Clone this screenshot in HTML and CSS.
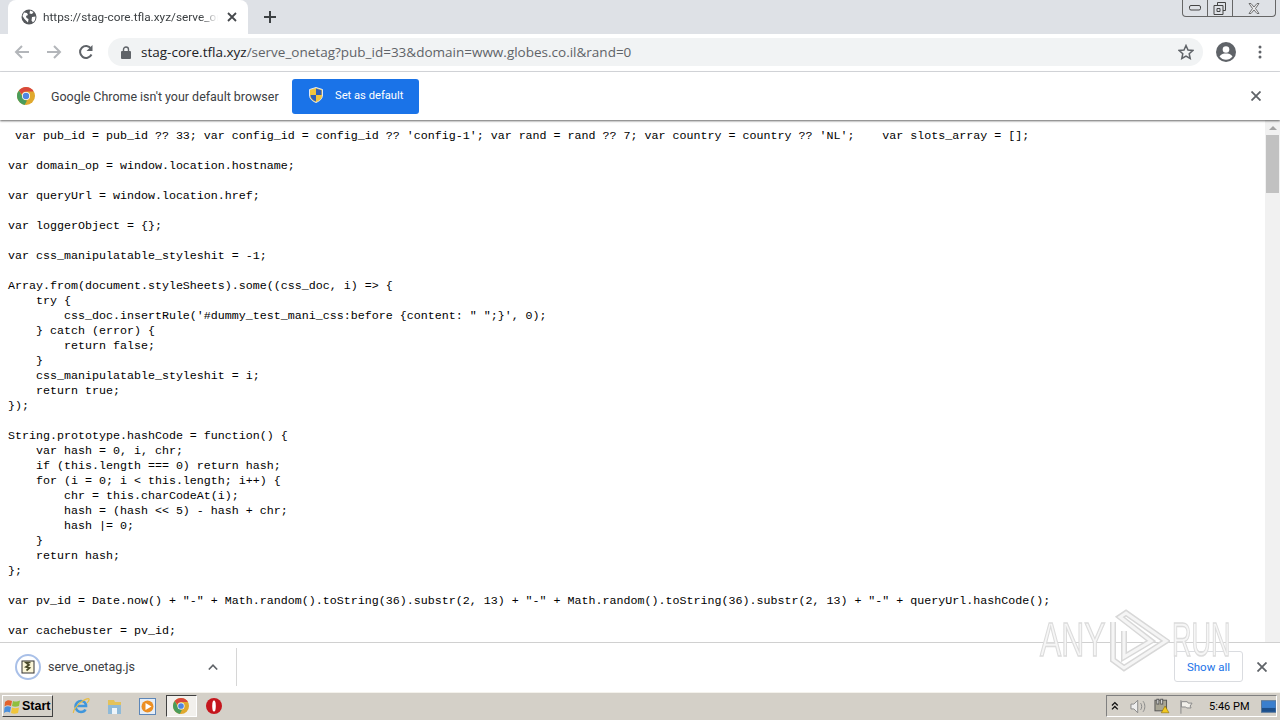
FILE: index.html
```html
<!DOCTYPE html>
<html lang="en">
<head>
    <meta charset="UTF-8">
    <meta name="viewport" content="width=device-width, initial-scale=1.0">
    <title>serve_onetag.js</title>
    <link rel="stylesheet" href="styles.css">
</head>
<body>
    <div class="window">
        <div class="tabstrip">
            <div class="tab">
                <svg class="tab-globe" width="16" height="16" viewBox="0 0 16 16"><circle cx="8" cy="8" r="7.5" fill="#55585c"/><path d="M3 3.500l3 .5 1 2-2 1 .5 2 2 1-.5 3.500L3.500 10 1.500 7zM9 1.500l3.500 1.500-1.500 2-2.500-.5zM11 8l3.500-.5-.5 3.500-2 2.500-1.500-2z" fill="#fff"/></svg>
                <span class="tab-title">https://stag-core.tfla.xyz/serve_on</span>
                <svg class="tab-close" width="10" height="10" viewBox="0 0 10 10"><path d="M1 1l8 8M9 1l-8 8" stroke="#45484c" stroke-width="1.800"/></svg>
            </div>
            <svg class="newtab" width="14" height="14" viewBox="0 0 14 14"><path d="M7 1v12M1 7h12" stroke="#3c4043" stroke-width="2"/></svg>
            <div class="winbtns">
                <div class="winbtn winbtn-min"><svg width="14" height="8" viewBox="0 0 14 8"><rect x="1.500" y="1.500" width="11" height="4.500" rx="1.500" fill="none" stroke="#444"/></svg></div>
                <div class="winbtn winbtn-max"><svg width="14" height="13" viewBox="0 0 14 13"><path d="M4.500 3V.5h8v8H10M1 3.500h9v9H1zM4 6.500h3v3H4z" fill="none" stroke="#444"/></svg></div>
                <div class="winbtn winbtn-close"><svg width="12" height="11" viewBox="0 0 12 11"><path d="M1 .5h2l3 3.500 3-3.500h2L7.500 5.500 11 10.500H9L6 7 3 10.500H1l3.500-5z" fill="#e8e8ea" stroke="#555" stroke-width=".8"/></svg></div>
            </div>
        </div>

        <div class="toolbar">
            <svg class="nav-icon" width="16" height="16" viewBox="0 0 16 16"><path d="M15 8H2M8 2L2 8l6 6" fill="none" stroke="#b3b6ba" stroke-width="2"/></svg>
            <svg class="nav-icon" width="16" height="16" viewBox="0 0 16 16"><path d="M1 8h13M8 2l6 6-6 6" fill="none" stroke="#b3b6ba" stroke-width="2"/></svg>
            <svg class="nav-icon nav-reload" width="16" height="16" viewBox="0 0 16 16"><path d="M13.500 10.500A6 6 0 1 1 13 4.500" fill="none" stroke="#5f6368" stroke-width="2"/><path d="M14.500 1v6h-6z" fill="#5f6368"/></svg>
            <div class="omnibox">
                <svg class="lock" width="10" height="13" viewBox="0 0 10 13"><path d="M2.500 5V3.500a2.500 2.500 0 0 1 5 0V5" fill="none" stroke="#5f6368" stroke-width="1.400"/><rect y="5" width="10" height="8" rx="1" fill="#5f6368"/></svg>
                <span class="url"><span class="url-host">stag-core.tfla.xyz</span>/serve_onetag?pub_id=33&amp;domain=www.globes.co.il&amp;rand=0</span>
                <svg class="star" width="16" height="16" viewBox="0 0 16 16"><path d="M8 1.500l2 4.500 4.800.5-3.600 3.200 1 4.800L8 12l-4.200 2.500 1-4.800L1.200 6.500 6 6z" fill="none" stroke="#5f6368" stroke-width="1.500"/></svg>
            </div>
            <svg class="avatar" width="20" height="20" viewBox="0 0 20 20"><circle cx="10" cy="10" r="10" fill="#5f6368"/><circle cx="10" cy="7.500" r="3.300" fill="#fff"/><path d="M3.500 14.500c1.500-2.500 4-3 6.500-3s5 .5 6.500 3c-1.500 2-4 3.300-6.500 3.300s-5-1.300-6.500-3.300z" fill="#fff"/></svg>
            <svg class="dots" width="4" height="14" viewBox="0 0 4 14"><circle cx="2" cy="2" r="1.500" fill="#5f6368"/><circle cx="2" cy="7" r="1.500" fill="#5f6368"/><circle cx="2" cy="12" r="1.500" fill="#5f6368"/></svg>
        </div>

        <div class="infobar">
            <svg class="chrome-icon" width="18" height="18" viewBox="0 0 18 18"><circle cx="9" cy="9" r="9" fill="#e0a92e"/><path d="M9 0a9 9 0 0 1 7.800 4.500H9A4.500 4.500 0 0 0 4.800 7.400L1.900 3.500A9 9 0 0 1 9 0z" fill="#d9483b"/><path d="M1.900 3.500l3.900 6.800A4.500 4.500 0 0 0 10 13.400L7.700 17.900A9 9 0 0 1 1.900 3.500z" fill="#4a9c5b"/><circle cx="9" cy="9" r="4" fill="#fff"/><circle cx="9" cy="9" r="3.200" fill="#4f86e0"/></svg>
            <span class="info-text">Google Chrome isn't your default browser</span>
            <div class="default-btn">
                <svg width="14" height="16" viewBox="0 0 14 16"><path d="M7 .5l6.500 2v5.500c0 3.800-2.800 6-6.500 7.500-3.700-1.500-6.500-3.700-6.500-7.500V2.500z" fill="#f2c53d" stroke="#dfe8f5"/><path d="M7 1.500l5.500 1.700V8H7zM7 8v6.500C3.800 13.200 1.500 11.200 1.500 8z" fill="#2f5fb8"/></svg>
                <span>Set as default</span>
            </div>
            <svg class="info-close" width="10" height="10" viewBox="0 0 10 10"><path d="M.5.5l9 9M9.500.5l-9 9" stroke="#5f6368" stroke-width="1.800"/></svg>
        </div>

        <div class="content">
<pre class="source"> var pub_id = pub_id ?? 33; var config_id = config_id ?? 'config-1'; var rand = rand ?? 7; var country = country ?? 'NL';    var slots_array = [];

var domain_op = window.location.hostname;

var queryUrl = window.location.href;

var loggerObject = {};

var css_manipulatable_styleshit = -1;

Array.from(document.styleSheets).some((css_doc, i) =&gt; {
    try {
        css_doc.insertRule('#dummy_test_mani_css:before {content: " ";}', 0);
    } catch (error) {
        return false;
    }
    css_manipulatable_styleshit = i;
    return true;
});

String.prototype.hashCode = function() {
    var hash = 0, i, chr;
    if (this.length === 0) return hash;
    for (i = 0; i &lt; this.length; i++) {
        chr = this.charCodeAt(i);
        hash = (hash &lt;&lt; 5) - hash + chr;
        hash |= 0;
    }
    return hash;
};

var pv_id = Date.now() + "-" + Math.random().toString(36).substr(2, 13) + "-" + Math.random().toString(36).substr(2, 13) + "-" + queryUrl.hashCode();

var cachebuster = pv_id;
</pre>
            <div class="scrollbar">
                <div class="scroll-up"></div>
                <div class="scroll-thumb"></div>
            </div>
        </div>

        <div class="downloads">
            <svg class="file-icon" width="26" height="26" viewBox="0 0 26 26"><circle cx="13" cy="13" r="12" fill="#fff" stroke="#a9c0e8" stroke-width="2"/><rect x="7" y="7" width="12" height="12" fill="#fbf6d8" stroke="#333"/><path d="M15.500 8.500h-4.500l3 2.500-3 2 3.500 1-3 2.500" fill="none" stroke="#4a4a2a" stroke-width="1.700"/></svg>
            <span class="file-name">serve_onetag.js</span>
            <svg class="file-chevron" width="10" height="6" viewBox="0 0 10 6"><path d="M.8 5.500L5 1.200l4.200 4.300" fill="none" stroke="#5f6368" stroke-width="1.600"/></svg>
            <div class="file-sep"></div>
            <div class="show-all">Show all</div>
            <svg class="dl-close" width="10" height="10" viewBox="0 0 10 10"><path d="M.5.5l9 9M9.500.5l-9 9" stroke="#5f6368" stroke-width="1.800"/></svg>
        </div>

        <div class="taskbar">
            <div class="start">
                <svg width="17" height="17" viewBox="0 0 17 17"><path d="M1 4c2-2 4-2 7-1L7 8C4.500 7 2.500 7 .5 8.500z" fill="#e2622c"/><path d="M9 3c2 .8 4 1 7-.5L15 8c-3 1-5 .8-7 0z" fill="#8fbf3e"/><path d="M.5 9.500c2-1.500 4-1.500 6.500-.5l-1 5.500c-2-1-4-1-6 .5z" fill="#4a8fdc"/><path d="M8 9.500c2 .8 4 1 7 0l-1 5.500c-3 1-5 .8-7 0z" fill="#f0c53a"/></svg>
                <span>Start</span>
            </div>
            <div class="quick">
                <div class="quick-item"><svg width="18" height="18" viewBox="0 0 18 18"><path d="M4.500 9h9.500c0-3-2-5-5-5s-5.500 2.500-5.500 5.500S6 15 9 15c2 0 3.700-1 4.500-2.500" fill="none" stroke="#3f96dc" stroke-width="2.600"/><path d="M1.500 16c-1-2 4-9 9-12 3.500-2 6-3 6.500-2s-1 3-2 4" fill="none" stroke="#e8bd45" stroke-width="1.200"/></svg></div>
                <div class="quick-item"><svg width="17" height="17" viewBox="0 0 17 17"><path d="M2 2h6l1 2h6v12H2z" fill="#e3c25a"/><path d="M2 7h13v9H2z" fill="#8fbad8"/><rect x="6" y="10" width="5" height="6" fill="#eef5fa"/></svg></div>
                <div class="quick-item"><svg width="17" height="17" viewBox="0 0 17 17"><rect x=".5" y=".5" width="16" height="16" fill="#e6eef7" stroke="#5c86b8"/><circle cx="8.500" cy="8.500" r="6" fill="#ec8f23"/><path d="M6.500 5l6 3.500-6 3.500z" fill="#fff"/></svg></div>
                <div class="quick-item quick-active"><svg width="16" height="16" viewBox="0 0 18 18"><circle cx="9" cy="9" r="9" fill="#e0a92e"/><path d="M9 0a9 9 0 0 1 7.800 4.500H9A4.500 4.500 0 0 0 4.800 7.400L1.900 3.500A9 9 0 0 1 9 0z" fill="#d9483b"/><path d="M1.900 3.500l3.900 6.800A4.500 4.500 0 0 0 10 13.400L7.700 17.900A9 9 0 0 1 1.900 3.500z" fill="#4a9c5b"/><circle cx="9" cy="9" r="4" fill="#fff"/><circle cx="9" cy="9" r="3.200" fill="#4f86e0"/></svg></div>
                <div class="quick-item"><svg width="16" height="16" viewBox="0 0 16 16"><circle cx="8" cy="8" r="8" fill="#c5161d"/><ellipse cx="8" cy="8" rx="1.800" ry="5.500" fill="#fff"/></svg></div>
            </div>
            <div class="tray">
                <svg width="8" height="10" viewBox="0 0 8 10"><path d="M1 4.500l3-3 3 3M1 8.500l3-3 3 3" fill="none" stroke="#111" stroke-width="1.400"/></svg>
                <svg class="tray-speaker" width="17" height="15" viewBox="0 0 17 15"><path d="M1 5h3l4-4v13l-4-4H1z" fill="#eee" stroke="#888"/><path d="M11 4c1.500 2 1.500 5 0 7M13.500 2c2.500 3 2.500 8 0 11" fill="none" stroke="#888"/></svg>
                <svg width="16" height="16" viewBox="0 0 16 16"><rect x="1" y="2" width="12" height="11" fill="#a8a594" stroke="#555"/><rect x="3" y="1" width="2" height="5" fill="#fff" stroke="#555"/><rect x="7" y="1" width="2" height="5" fill="#fff" stroke="#555"/><path d="M11.500 8l4 7h-8z" fill="#f2c81e" stroke="#8a6d00" stroke-width=".6"/></svg>
                <svg class="tray-flag" width="15" height="15" viewBox="0 0 15 15"><path d="M2 1v14" stroke="#888"/><path d="M2.500 2.500h6l1 1.500h4l-2 3 1 2H8L7 8H2.500z" fill="#f2f0ea" stroke="#888"/></svg>
                <span class="clock">5:46 PM</span>
                <svg class="desk" width="16" height="13" viewBox="0 0 16 13"><rect x=".5" y=".5" width="15" height="12" fill="#3a7fce" stroke="#5a7796"/><rect x="1" y="8" width="14" height="4" fill="#1d4f8a"/></svg>
            </div>
        </div>

        <div class="watermark">
            <span class="wm-word wm-any">ANY</span>
            <svg class="wm-play" width="62" height="66" viewBox="0 0 62 66"><path d="M5 14v38l11 8 42-27L18 5l-6 4 31 24-27 16V23" fill="none" stroke="#d8d8d8" stroke-width="6"/><path d="M5 14v38l11 8 42-27L18 5l-6 4 31 24-27 16V23" fill="none" stroke="#f5f5f5" stroke-width="3"/></svg>
            <span class="wm-word wm-run">RUN</span>
        </div>
    </div>
</body>
</html>
```

FILE: styles.css
```css
* {
    box-sizing: border-box;
}
body {
    margin: 0;
    font-family: "Open Sans", Arial, sans-serif;
    background-color: #fff;
}
.window {
    position: relative;
    display: flex;
    flex-direction: column;
    width: 1280px;
    height: 720px;
    overflow: hidden;
}

/* tab strip */
.tabstrip {
    display: flex;
    align-items: flex-start;
    flex: 0 0 34px;
    padding-left: 8px;
    background-color: #dee1e6;
}
.tab {
    display: flex;
    align-items: center;
    width: 240px;
    height: 34px;
    padding: 0 11px 0 13px;
    border-radius: 8px 8px 0 0;
    background-color: #fff;
}
.tab-globe {
    flex: none;
    margin-right: 6px;
}
.tab-title {
    flex: 1;
    overflow: hidden;
    white-space: nowrap;
    font-family: Roboto, Arial, sans-serif;
    font-size: 11.800px;
    color: #3c4043;
    margin-right: 9px;
    -webkit-mask-image: linear-gradient(to right, #000 90%, transparent);
    mask-image: linear-gradient(to right, #000 90%, transparent);
}
.tab-close {
    flex: none;
}
.newtab {
    margin: 10px 0 0 15px;
}
.winbtns {
    display: flex;
    height: 17px;
    margin-left: auto;
    margin-right: 4px;
    border: 1px solid #666;
    border-top: none;
    border-radius: 0 0 4px 4px;
}
.winbtn {
    display: flex;
    align-items: center;
    justify-content: center;
    width: 25px;
    border-right: 1px solid #666;
}
.winbtn-close {
    width: 42px;
    border-right: none;
}

/* toolbar */
.toolbar {
    display: flex;
    align-items: center;
    flex: 0 0 38px;
    padding: 0 18px 1px 14px;
    border-bottom: 1px solid #dadce0;
    background-color: #fff;
}
.nav-icon {
    margin-right: 16px;
}
.nav-reload {
    margin-right: 14px;
}
.omnibox {
    display: flex;
    align-items: center;
    flex: 1;
    height: 28px;
    padding: 0 9px 0 13px;
    border-radius: 14px;
    background-color: #f1f3f4;
}
.lock {
    margin-right: 10px;
}
.url {
    flex: 1;
    font-size: 13.500px;
    color: #5f6368;
    white-space: nowrap;
}
.url-host {
    color: #202124;
}
.avatar {
    margin-left: 13px;
}
.dots {
    margin-left: 22px;
}

/* default browser bar */
.infobar {
    display: flex;
    align-items: center;
    flex: 0 0 48px;
    padding: 0 19px 0 17px;
    background-color: #fff;
    box-shadow: 0 1px 2px rgba(0, 0, 0, 0.6);
    z-index: 1;
}
.chrome-icon {
    margin-right: 16px;
}
.info-text {
    width: 229px;
    font-family: Roboto, Arial, sans-serif;
    font-size: 12.450px;
    color: #3c4043;
    white-space: nowrap;
}
.default-btn {
    display: flex;
    align-items: center;
    width: 127px;
    height: 35px;
    margin-left: 12px;
    padding: 0 0 2px 17px;
    border-radius: 3px;
    background-color: #1a73e8;
    font-family: Roboto, Arial, sans-serif;
    font-size: 11.200px;
    color: #fff;
}
.default-btn span {
    margin-left: 12px;
}
.info-close {
    margin-left: auto;
}

/* page source */
.content {
    display: flex;
    flex: 1;
    min-height: 0;
    background-color: #fff;
}
.source {
    flex: 1;
    margin: 0;
    padding: 9px 0 0 8px;
    overflow: hidden;
    font-family: "Liberation Mono", monospace;
    font-size: 11.670px;
    line-height: 15px;
    color: #000;
}
.scrollbar {
    flex: 0 0 15px;
    background-color: #f1f1f1;
}
.scroll-up {
    width: 0;
    height: 0;
    margin: 6px auto 5px;
    border-left: 4px solid transparent;
    border-right: 4px solid transparent;
    border-bottom: 4px solid #a3a3a3;
}
.scroll-thumb {
    height: 58px;
    margin: 0 1px;
    background-color: #c1c1c1;
}

/* download shelf */
.downloads {
    display: flex;
    align-items: center;
    flex: 0 0 50px;
    padding: 0 13px 2px 15px;
    border-top: 1px solid #d0d0d0;
    background-color: #fff;
}
.file-name {
    width: 88px;
    margin-left: 7px;
    font-family: Roboto, Arial, sans-serif;
    font-size: 12.500px;
    color: #3c4043;
    white-space: nowrap;
}
.file-chevron {
    margin-left: 72px;
}
.file-sep {
    width: 1px;
    height: 38px;
    margin-left: 18px;
    background-color: #d6d6d6;
}
.show-all {
    display: flex;
    align-items: center;
    justify-content: center;
    width: 69px;
    height: 31px;
    margin-left: auto;
    border: 1px solid #dadce0;
    border-radius: 3px;
    font-family: Roboto, Arial, sans-serif;
    font-size: 11.500px;
    color: #1a73e8;
}
.dl-close {
    margin-left: 14px;
}

/* windows taskbar */
.taskbar {
    display: flex;
    align-items: center;
    flex: 0 0 28px;
    padding: 0 3px 1px 2px;
    border-top: 1px solid #f4f2ec;
    background-color: #d4d0c8;
}
.start {
    display: flex;
    align-items: center;
    width: 51px;
    height: 22px;
    padding-left: 1px;
    border: 1px solid;
    border-color: #fff #404040 #404040 #fff;
    font-family: "Liberation Sans", Arial, sans-serif;
    font-size: 12.500px;
    font-weight: bold;
    color: #000;
}
.start span {
    margin-left: 1px;
}
.quick {
    display: flex;
    align-items: center;
    margin-left: 11px;
}
.quick-item {
    display: flex;
    align-items: center;
    justify-content: center;
    width: 33.500px;
    height: 22px;
}
.quick-active {
    width: 31px;
    margin: 0 1px;
    border: 1px solid;
    border-color: #404040 #fff #fff #404040;
    background-color: #f2f0ec;
}
.tray {
    display: flex;
    align-items: center;
    gap: 8px;
    width: 171px;
    height: 22px;
    margin-left: auto;
    padding-left: 4px;
    border: 1px solid;
    border-color: #808080 #fff #fff #808080;
}
.tray-speaker {
    margin-left: 3px;
}
.tray-flag {
    margin-left: 1px;
}
.clock {
    margin-left: 8px;
    font-family: Roboto, Arial, sans-serif;
    font-size: 11px;
    color: #000;
    white-space: nowrap;
}
.desk {
    margin-left: 3px;
}

/* any.run watermark, sits on top of everything */
.watermark {
    position: absolute;
    left: 1040px;
    top: 608px;
    display: flex;
    align-items: center;
    font-family: "Liberation Sans", Arial, sans-serif;
    font-size: 49px;
    line-height: 36px;
    pointer-events: none;
}
.wm-word {
    display: block;
    width: 62px;
    margin-top: -4px;
    color: #f6f6f6;
    -webkit-text-stroke: 1.500px #dcdcdc;
    transform-origin: left center;
    white-space: nowrap;
}
.wm-any {
    transform: scaleX(0.65);
}
.wm-run {
    transform: scaleX(0.55);
}
.wm-play {
    flex: none;
    margin: 0 2px 0 6px;
}
```
